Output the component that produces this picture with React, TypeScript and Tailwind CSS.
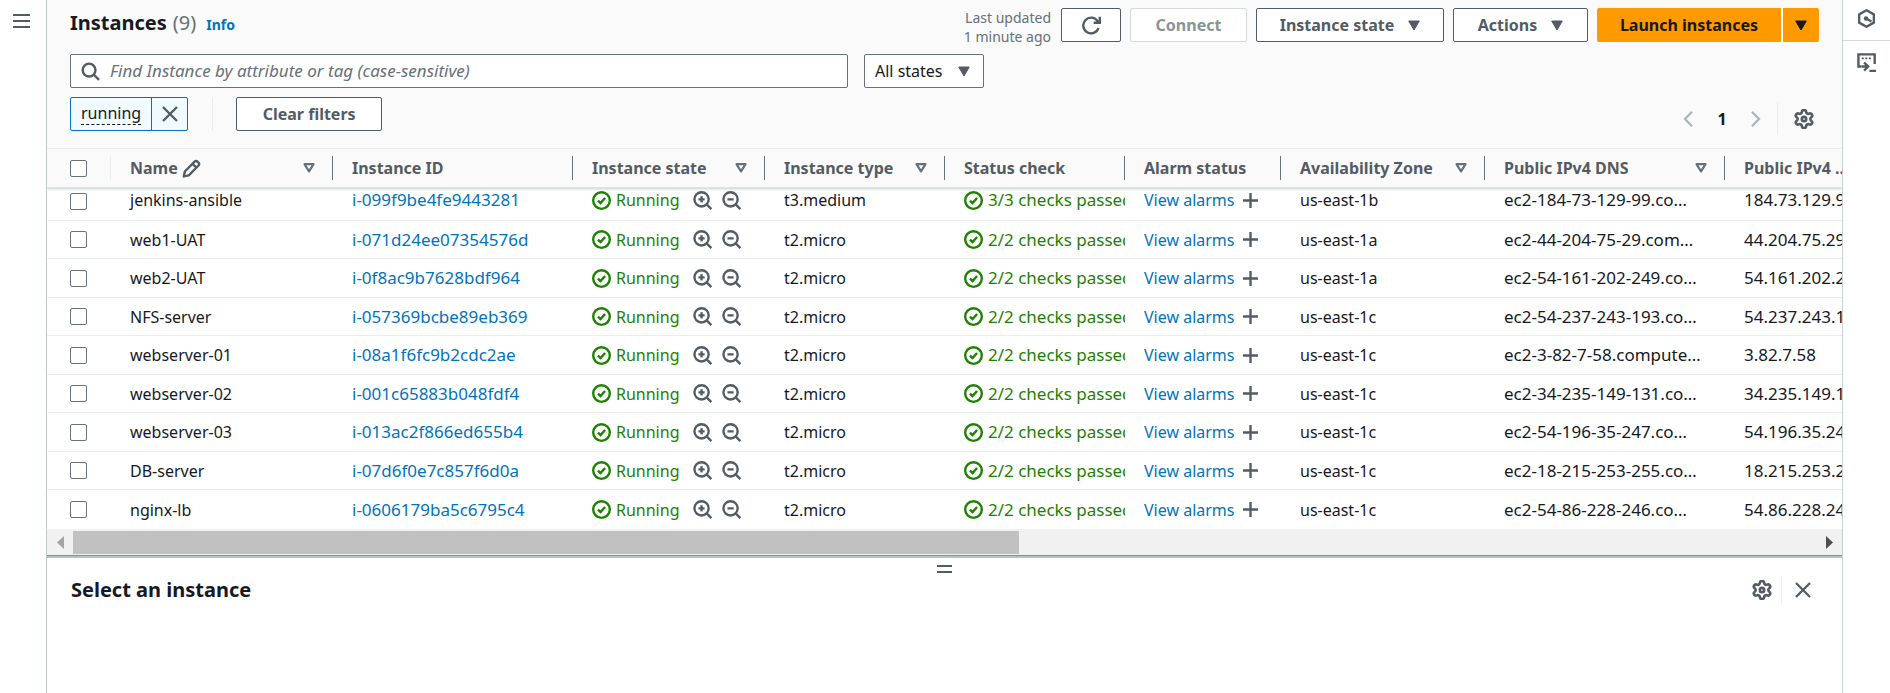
import type { ReactNode } from 'react';

type Instance = { name: string; id: string; type: string; checks: string; zone: string; dns: string; ip: string };

const instances: Instance[] = [
  { name: 'jenkins-ansible', id: 'i-099f9be4fe9443281', type: 't3.medium', checks: '3/3', zone: 'us-east-1b', dns: 'ec2-184-73-129-99.co…', ip: '184.73.129.99' },
  { name: 'web1-UAT', id: 'i-071d24ee07354576d', type: 't2.micro', checks: '2/2', zone: 'us-east-1a', dns: 'ec2-44-204-75-29.com…', ip: '44.204.75.29' },
  { name: 'web2-UAT', id: 'i-0f8ac9b7628bdf964', type: 't2.micro', checks: '2/2', zone: 'us-east-1a', dns: 'ec2-54-161-202-249.co…', ip: '54.161.202.249' },
  { name: 'NFS-server', id: 'i-057369bcbe89eb369', type: 't2.micro', checks: '2/2', zone: 'us-east-1c', dns: 'ec2-54-237-243-193.co…', ip: '54.237.243.193' },
  { name: 'webserver-01', id: 'i-08a1f6fc9b2cdc2ae', type: 't2.micro', checks: '2/2', zone: 'us-east-1c', dns: 'ec2-3-82-7-58.compute…', ip: '3.82.7.58' },
  { name: 'webserver-02', id: 'i-001c65883b048fdf4', type: 't2.micro', checks: '2/2', zone: 'us-east-1c', dns: 'ec2-34-235-149-131.co…', ip: '34.235.149.131' },
  { name: 'webserver-03', id: 'i-013ac2f866ed655b4', type: 't2.micro', checks: '2/2', zone: 'us-east-1c', dns: 'ec2-54-196-35-247.co…', ip: '54.196.35.247' },
  { name: 'DB-server', id: 'i-07d6f0e7c857f6d0a', type: 't2.micro', checks: '2/2', zone: 'us-east-1c', dns: 'ec2-18-215-253-255.co…', ip: '18.215.253.255' },
  { name: 'nginx-lb', id: 'i-0606179ba5c6795c4', type: 't2.micro', checks: '2/2', zone: 'us-east-1c', dns: 'ec2-54-86-228-246.co…', ip: '54.86.228.246' },
];

const columns: { label: string; width: string; sort?: boolean; edit?: boolean }[] = [
  { label: 'Name', width: 'w-[222px]', sort: true, edit: true },
  { label: 'Instance ID', width: 'w-[240px]' },
  { label: 'Instance state', width: 'w-[192px]', sort: true },
  { label: 'Instance type', width: 'w-[180px]', sort: true },
  { label: 'Status check', width: 'w-[180px]' },
  { label: 'Alarm status', width: 'w-[156px]' },
  { label: 'Availability Zone', width: 'w-[204px]', sort: true },
  { label: 'Public IPv4 DNS', width: 'w-[240px]', sort: true },
  { label: 'Public IPv4 ...', width: '' },
];

function Icon({ children, className = '' }: { children: ReactNode; className?: string }) {
  return (
    <svg viewBox="0 0 16 16" fill="none" stroke="currentColor" strokeWidth="2" aria-hidden="true" className={`size-[19px] shrink-0 ${className}`}>
      {children}
    </svg>
  );
}

function CaretDown() {
  return (
    <svg viewBox="0 0 12 11" fill="currentColor" stroke="currentColor" strokeLinejoin="round" aria-hidden="true" className="h-[11px] w-3 shrink-0">
      <path d="M.7 1h10.6L6 10z" />
    </svg>
  );
}

function SortIcon() {
  return (
    <svg viewBox="0 0 12 10" fill="none" stroke="currentColor" strokeWidth="2.2" strokeLinejoin="round" aria-hidden="true" className="h-[10px] w-3 shrink-0 text-[#687078]">
      <path d="M1.5 1.2h9L6 8.4z" />
    </svg>
  );
}

function Gear() {
  return (
    <svg viewBox="1 1 22 22" fill="none" stroke="currentColor" strokeWidth="2.9" strokeLinejoin="round" aria-hidden="true" className="size-5">
      <path d="M9.671 4.136a2.34 2.34 0 0 1 4.659 0 2.34 2.34 0 0 0 3.319 1.915 2.34 2.34 0 0 1 2.33 4.033 2.34 2.34 0 0 0 0 3.831 2.34 2.34 0 0 1-2.33 4.033 2.34 2.34 0 0 0-3.319 1.915 2.34 2.34 0 0 1-4.659 0 2.34 2.34 0 0 0-3.32-1.915 2.34 2.34 0 0 1-2.33-4.033 2.34 2.34 0 0 0 0-3.831A2.34 2.34 0 0 1 6.35 6.051a2.34 2.34 0 0 0 3.319-1.915" />
      <circle cx="12" cy="12" r="2.4" />
    </svg>
  );
}

function CloseIcon() {
  return (
    <svg viewBox="0 0 16 16" fill="none" stroke="currentColor" strokeWidth="2.3" aria-hidden="true" className="size-4">
      <path d="M1 1l14 14M15 1L1 15" />
    </svg>
  );
}

function CheckCircle() {
  return (
    <Icon>
      <circle cx="8" cy="8" r="7" />
      <path d="M5 8.1l2.2 2.1L11 5.9" />
    </Icon>
  );
}

function Magnifier({ plus }: { plus?: boolean }) {
  return (
    <Icon>
      <circle cx="7.2" cy="7" r="6" />
      <path d="M11.5 11.3l4 4M4.6 7h5.2" />
      {plus && <path d="M7.2 4.4v5.2" />}
    </Icon>
  );
}

const button = 'flex items-center justify-center rounded-[2px] border bg-white text-base leading-6 font-bold';
const box = 'block size-[17px] appearance-none rounded-[2px] border border-[#687078] bg-white checked:bg-[#0073bb]';

function Cell({ children, className = '' }: { children: ReactNode; className?: string }) {
  return (
    <td className="overflow-hidden border-b border-[#eaeded] p-0 group-first:align-top group-last:border-b-0">
      <div className={`flex h-6 items-center pl-[19px] whitespace-nowrap ${className}`}>{children}</div>
    </td>
  );
}

export default function App() {
  return (
    <div className="flex min-h-screen bg-white font-['Noto_Sans',sans-serif] text-base leading-6 text-[#16191f]">
      <nav aria-label="Service" className="w-[47px] shrink-0 border-r border-[#c3caca] pt-[13px] pl-[13px]">
        <button aria-label="Open navigation" className="block text-[#545b64]">
          <svg viewBox="0 0 17 16" stroke="currentColor" strokeWidth="2" aria-hidden="true" className="h-4 w-[17px]">
            <path d="M0 2h17M0 8h17M0 14h17" />
          </svg>
        </button>
      </nav>

      <main className="flex min-w-0 flex-1 flex-col">
        <header className="bg-[#fafafa] pt-2 pr-[23px] pb-[13px] pl-[23px] text-[#545b64]">
          <div className="flex h-[37px] items-start justify-between">
            <h1 className="flex items-baseline text-xl leading-[30px] font-bold text-[#16191f]">
              Instances<span className="ml-[6px] font-normal text-[#687078]">(9)</span>
              <a href="#info" className="ml-[10px] text-sm text-[#0073bb]">Info</a>
            </h1>
            <div className="flex items-start">
              <p className="mr-[10px] text-right text-sm leading-[19px] text-[#687078]">
                Last updated<br />1 minute ago
              </p>
              <div className="flex gap-[9px]">
                <button aria-label="Refresh" className={`${button} h-[34px] w-[60px] border-[#545b64]`}>
                  <Icon>
                    <path d="M13.9 10.2A6.6 6.6 0 1 1 13 4.1l1.6 1.4M15 .6v5.1H9.8" />
                  </Icon>
                </button>
                <button disabled className={`${button} h-[34px] w-[117px] border-[#d5dbdb] text-[#879596]`}>Connect</button>
                <button className={`${button} h-[34px] w-[188px] gap-[14px] border-[#545b64]`}>Instance state<CaretDown /></button>
                <button className={`${button} h-[34px] w-[135px] gap-[14px] border-[#545b64]`}>Actions<CaretDown /></button>
                <div className="flex gap-[2px] text-[#16191f]">
                  <button className="flex h-[34px] w-[184px] items-center justify-center rounded-l-[2px] bg-[#ff9900] font-bold">Launch instances</button>
                  <button aria-label="More launch options" className="flex h-[34px] w-9 items-center justify-center rounded-r-[2px] bg-[#ff9900]"><CaretDown /></button>
                </div>
              </div>
            </div>
          </div>

          <div className="mt-[9px] flex gap-4">
            <label className="flex h-[34px] w-[778px] items-center gap-[10px] rounded-[2px] border border-[#687078] bg-white pl-[10px]">
              <Icon>
                <circle cx="6.8" cy="6.8" r="5.4" />
                <path d="M10.7 10.7l4.5 4.3" />
              </Icon>
              <input type="text" aria-label="Find instance" placeholder="Find Instance by attribute or tag (case-sensitive)" className="min-w-0 flex-1 text-[17px] leading-6 outline-none placeholder:text-[#687078] placeholder:italic" />
            </label>
            <div className="relative">
              <select aria-label="Instance state filter" className="h-[34px] w-[120px] appearance-none rounded-[2px] border border-[#687078] bg-white pl-[10px] text-base text-[#16191f]">
                <option>All states</option>
              </select>
              <span className="pointer-events-none absolute top-3 right-[14px]"><CaretDown /></span>
            </div>
          </div>

          <div className="mt-[9px] flex items-start justify-between">
            <div className="flex h-[34px] items-center">
              <div className="flex h-full items-center rounded-[2px] border border-[#0073bb] bg-[#f1faff]">
                <button className="mx-[10px] border-b border-dashed border-[#16191f] leading-[21px] text-[#16191f]">running</button>
                <button aria-label="Remove filter" className="flex h-full w-9 items-center justify-center border-l border-[#0073bb]"><CloseIcon /></button>
              </div>
              <div className="ml-6 h-full w-px bg-[#eaeded]" />
              <button className={`${button} ml-[23px] h-[34px] w-[146px] border-[#545b64]`}>Clear filters</button>
            </div>
            <div className="mt-[5px] flex h-[33px] items-center pr-[5px]">
              <button disabled aria-label="Previous page" className="text-[#aab7b8]">
                <svg viewBox="0 0 10 16" fill="none" stroke="currentColor" strokeWidth="2.3" aria-hidden="true" className="h-4 w-[10px]"><path d="M9 .8L2 8l7 7.2" /></svg>
              </button>
              <button aria-current="page" className="w-[58px] text-center font-bold text-[#16191f]">1</button>
              <button disabled aria-label="Next page" className="text-[#aab7b8]">
                <svg viewBox="0 0 10 16" fill="none" stroke="currentColor" strokeWidth="2.3" aria-hidden="true" className="h-4 w-[10px]"><path d="M1 .8L8 8l-7 7.2" /></svg>
              </button>
              <div className="mr-4 ml-4 h-full w-px bg-[#eaeded]" />
              <button aria-label="Preferences"><Gear /></button>
            </div>
          </div>
        </header>

        <div className="overflow-hidden">
          <table className="w-full table-fixed border-separate border-spacing-0">
            <thead>
              <tr className="h-10 bg-[#fafafa] text-left text-[#545b64] shadow-[0_1px_3px_#c9cfcf]">
                <th className="w-16 border-y border-[#eaeded] border-b-[#dfe3e3] p-0">
                  <div className="flex h-6 items-center border-r border-[#eaeded] pl-[23px]">
                    <input type="checkbox" aria-label="Select all instances" className={box} />
                  </div>
                </th>
                {columns.map((c) => (
                  <th key={c.label} scope="col" className={`border-y border-[#eaeded] border-b-[#dfe3e3] p-0 font-bold ${c.width}`}>
                    <div className={`flex h-6 items-center pl-[19px] whitespace-nowrap ${c.width ? 'border-r border-[#687078] pr-[17px]' : ''}`}>
                      {c.label}
                      {c.edit && (
                        <Icon className="ml-1">
                          <path d="M1.5 14.7l.9-4.2 8.2-8.300a1.700 1.700 0 0 1 2.4 0l.9.9a1.700 1.700 0 0 1 0 2.4l-8.2 8.300zM8.8 4l3.3 3.3" strokeLinejoin="round" />
                        </Icon>
                      )}
                      {c.sort && <button aria-label={`Sort by ${c.label}`} className="ml-auto"><SortIcon /></button>}
                    </div>
                  </th>
                ))}
              </tr>
            </thead>
            <tbody>
              {instances.map((row) => (
                <tr key={row.id} className="group h-[38px] first:h-[33px] odd:not-first:h-[39px]">
                  <td className="border-b border-[#eaeded] p-0 group-first:align-top group-last:border-b-0">
                    <div className="flex h-[26px] items-center pl-[23px]">
                      <input type="checkbox" aria-label={`Select ${row.name}`} className={box} />
                    </div>
                  </td>
                  <Cell>{row.name}</Cell>
                  <Cell className="text-[17px]"><a href={`#${row.id}`} className="text-[#0073bb]">{row.id}</a></Cell>
                  <Cell className="text-[#1d8102]">
                    <CheckCircle />
                    <span className="ml-[5px]">Running</span>
                    <span className="ml-[14px] flex gap-[10px] text-[#545b64]">
                      <button aria-label="Include this value"><Magnifier plus /></button>
                      <button aria-label="Exclude this value"><Magnifier /></button>
                    </span>
                  </Cell>
                  <Cell>{row.type}</Cell>
                  <Cell className="gap-[5px] text-[17px] text-[#1d8102]"><CheckCircle />{row.checks} checks passed</Cell>
                  <Cell>
                    <a href="#alarms" className="text-[#0073bb]">View alarms</a>
                    <button aria-label="Create alarm" className="ml-[7px] text-[#545b64]">
                      <Icon><path d="M1.7 8h12.6M8 1.7v12.6" /></Icon>
                    </button>
                  </Cell>
                  <Cell>{row.zone}</Cell>
                  <Cell className="text-[17px]">{row.dns}</Cell>
                  <Cell className="text-[17px]">{row.ip}</Cell>
                </tr>
              ))}
            </tbody>
          </table>
        </div>

        <div className="flex h-[26px] items-center bg-[#f1f1f1]">
          <button aria-label="Scroll left" className="flex w-[26px] justify-center text-[#a3a3a3]">
            <svg viewBox="0 0 7 13" fill="currentColor" aria-hidden="true" className="h-[13px] w-[7px]"><path d="M7 0v13L0 6.5z" /></svg>
          </button>
          <div className="h-[23px] flex-1"><div className="h-full w-[54.3%] bg-[#c1c1c1]" /></div>
          <button aria-label="Scroll right" className="flex w-[26px] justify-center text-[#505050]">
            <svg viewBox="0 0 7 13" fill="currentColor" aria-hidden="true" className="h-[13px] w-[7px]"><path d="M0 0v13l7-6.5z" /></svg>
          </button>
        </div>

        <section aria-label="Details" className="flex-1 border-t border-[#879196] bg-white">
          <div className="h-[2px] bg-[#b9c2c3]" />
          <button aria-label="Resize panel" className="mx-auto mt-[6px] block text-[#545b64]">
            <svg viewBox="0 0 15 10" stroke="currentColor" strokeWidth="2" aria-hidden="true" className="h-[10px] w-[15px]"><path d="M0 2h15M0 8h15" /></svg>
          </button>
          <div className="mt-[2px] flex h-7 items-center pr-[31px] pl-6">
            <h2 className="mr-auto text-xl font-bold">Select an instance</h2>
            <button aria-label="Panel preferences" className="text-[#545b64]"><Gear /></button>
            <div className="mr-[13px] ml-[9px] h-full w-px bg-[#eaeded]" />
            <button aria-label="Close panel" className="text-[#545b64]"><CloseIcon /></button>
          </div>
        </section>
      </main>

      <aside aria-label="Tools" className="w-12 shrink-0 border-l border-[#c9d0d0] text-[#545b64]">
        <button aria-label="Diagram" className="flex h-[41px] w-full items-center justify-center border-b border-[#d5dbdb] pb-1">
          <Icon>
            <path d="M8 1l6.2 3.5v7L8 15l-6.2-3.5v-7z" strokeLinejoin="round" />
            <circle cx="7.6" cy="8" r="1.9" fill="currentColor" stroke="none" />
            <path d="M7.6 8l4.6 2.6" />
          </Icon>
        </button>
        <button aria-label="CloudShell" className="flex h-[42px] w-full items-center justify-center">
          <Icon>
            <path d="M3.8 11.4H1.2V1.2h13.7v8M4 11.4h4.5M6 8l3.4 3.4L6 14.8M10.500 15H16" />
            <path d="M4 4.5h8.5" strokeDasharray="1.7 1.3" strokeWidth="1.6" />
          </Icon>
        </button>
      </aside>
    </div>
  );
}
